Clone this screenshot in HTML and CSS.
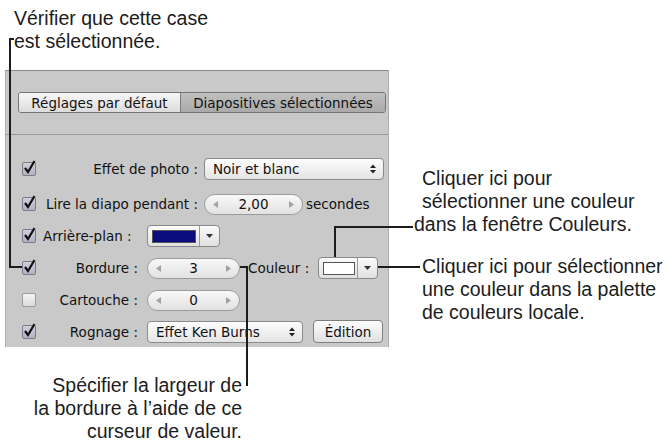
FILE: index.html
```html
<!DOCTYPE html>
<html lang="fr">
<head>
    <meta charset="UTF-8">
    <meta name="viewport" content="width=device-width, initial-scale=1.0">
    <title>Réglages du diaporama</title>
    <link rel="stylesheet" href="styles.css">
</head>
<body>
    <div class="page">
        <p class="note note-top">Vérifier que cette case<br>est sélectionnée.</p>

        <div class="panel">
            <div class="panel-head">
                <div class="segmented">
                    <span class="seg">Réglages par défaut</span>
                    <span class="seg active">Diapositives sélectionnées</span>
                </div>
            </div>

            <div class="panel-body">
                <div class="row first">
                    <span class="check"><svg width="15" height="16" viewBox="0 0 15 16"><path d="M3 9 L6 13 L12.5 2" fill="none" stroke="#111" stroke-width="2.2"/></svg></span>
                    <span class="label wide">Effet de photo :</span>
                    <div class="popup popup-photo">
                        <span>Noir et blanc</span>
                        <svg width="6" height="10" viewBox="0 0 6 10"><path d="M0 4 L3 0.5 L6 4 Z M0 6 L3 9.5 L6 6 Z" fill="#222"/></svg>
                    </div>
                </div>

                <div class="row">
                    <span class="check"><svg width="15" height="16" viewBox="0 0 15 16"><path d="M3 9 L6 13 L12.5 2" fill="none" stroke="#111" stroke-width="2.2"/></svg></span>
                    <span class="label wide">Lire la diapo pendant :</span>
                    <div class="stepper stepper-wide">
                        <svg width="5" height="7" viewBox="0 0 5 7"><path d="M5 0 L0 3.5 L5 7 Z" fill="#a3a3a3"/></svg>
                        <span>2,00</span>
                        <svg width="5" height="7" viewBox="0 0 5 7"><path d="M0 0 L5 3.5 L0 7 Z" fill="#a3a3a3"/></svg>
                    </div>
                    <span class="unit">secondes</span>
                </div>

                <div class="row">
                    <span class="check"><svg width="15" height="16" viewBox="0 0 15 16"><path d="M3 9 L6 13 L12.5 2" fill="none" stroke="#111" stroke-width="2.2"/></svg></span>
                    <span class="label narrow left">Arrière-plan :</span>
                    <div class="well well-bg">
                        <span class="swatch swatch-navy"></span>
                        <span class="well-menu"><svg width="7" height="4" viewBox="0 0 7 4"><path d="M0 0 H7 L3.5 4 Z" fill="#333"/></svg></span>
                    </div>
                </div>

                <div class="row">
                    <span class="check"><svg width="15" height="16" viewBox="0 0 15 16"><path d="M3 9 L6 13 L12.5 2" fill="none" stroke="#111" stroke-width="2.2"/></svg></span>
                    <span class="label narrow">Bordure :</span>
                    <div class="stepper stepper-small">
                        <svg width="5" height="7" viewBox="0 0 5 7"><path d="M5 0 L0 3.5 L5 7 Z" fill="#a3a3a3"/></svg>
                        <span>3</span>
                        <svg width="5" height="7" viewBox="0 0 5 7"><path d="M0 0 L5 3.5 L0 7 Z" fill="#a3a3a3"/></svg>
                    </div>
                    <span class="sub-label">Couleur :</span>
                    <div class="well well-border">
                        <span class="swatch swatch-white"></span>
                        <span class="well-menu"><svg width="7" height="4" viewBox="0 0 7 4"><path d="M0 0 H7 L3.5 4 Z" fill="#333"/></svg></span>
                    </div>
                </div>

                <div class="row">
                    <span class="check off"></span>
                    <span class="label narrow">Cartouche :</span>
                    <div class="stepper stepper-small">
                        <svg width="5" height="7" viewBox="0 0 5 7"><path d="M5 0 L0 3.5 L5 7 Z" fill="#a3a3a3"/></svg>
                        <span>0</span>
                        <svg width="5" height="7" viewBox="0 0 5 7"><path d="M0 0 L5 3.5 L0 7 Z" fill="#a3a3a3"/></svg>
                    </div>
                </div>

                <div class="row last">
                    <span class="check"><svg width="15" height="16" viewBox="0 0 15 16"><path d="M3 9 L6 13 L12.5 2" fill="none" stroke="#111" stroke-width="2.2"/></svg></span>
                    <span class="label narrow">Rognage :</span>
                    <div class="popup popup-crop">
                        <span>Effet Ken Burns</span>
                        <svg width="6" height="10" viewBox="0 0 6 10"><path d="M0 4 L3 0.5 L6 4 Z M0 6 L3 9.5 L6 6 Z" fill="#222"/></svg>
                    </div>
                    <button class="edit-btn">Édition</button>
                </div>
            </div>
        </div>

        <p class="note note-bottom">Spécifier la largeur de<br>la bordure à l’aide de ce<br>curseur de valeur.</p>

        <p class="note note-right note-well">Cliquer ici pour<br>sélectionner une couleur<br><span class="pull">dans la fenêtre Couleurs.</span></p>
        <p class="note note-right note-menu">Cliquer ici pour sélectionner<br>une couleur dans la palette<br>de couleurs locale.</p>

        <!-- leader lines -->
        <div class="lead lead-check-top"></div>
        <div class="lead lead-check-v"></div>
        <div class="lead lead-check-h"></div>
        <div class="lead lead-step-h"></div>
        <div class="lead lead-step-v"></div>
        <div class="lead lead-well-v"></div>
        <div class="lead lead-well-h"></div>
        <div class="lead lead-menu-h"></div>
    </div>
</body>
</html>
```

FILE: styles.css
```css
body {
    margin: 0;
    background-color: #ffffff;
    font-family: "Liberation Sans", Arial, sans-serif;
    color: #1c1c1c;
}

.page {
    position: relative;
    width: 667px;
    height: 446px;
    overflow: hidden;
}

.note {
    margin: 0;
    font-size: 19.5px;
    line-height: 23px;
}

.note-top {
    padding: 7px 0 0 14px;
}

.note-bottom {
    width: 242px;
    margin-top: 27px;
    text-align: right;
}

.note-right {
    position: absolute;
    left: 422px;
    white-space: nowrap;
}

.note-well {
    top: 167px;
}

.note-menu {
    top: 255px;
}

.pull {
    margin-left: -8px;
}

/* panel */

.panel {
    box-sizing: border-box;
    width: 384px;
    height: 277px;
    margin: 17px 0 0 5px;
    background-color: #c9c9c9;
    border-top: 1px solid #8a8a8a;
    border-left: 1px solid #adadad;
    border-right: 1px solid #adadad;
    font-family: "DejaVu Sans", Verdana, sans-serif;
    font-size: 13.5px;
    color: #111111;
}

.panel-head {
    height: 42px;
    padding: 21px 0 0 12px;
    border-bottom: 1px solid #9a9a9a;
}

.segmented {
    display: flex;
    box-sizing: border-box;
    width: 368px;
    height: 21px;
    border: 1px solid #737373;
    border-radius: 3px;
    overflow: hidden;
}

.seg {
    display: flex;
    align-items: center;
    justify-content: center;
    background: linear-gradient(#f7f7f7, #dcdcdc);
}

.seg:first-child {
    width: 161px;
    border-right: 1px solid #7c7c7c;
}

.seg.active {
    flex: 1;
    background: linear-gradient(#c0c0c0, #aaaaaa);
}

.panel-body {
    padding-top: 18px;
}

.row {
    display: flex;
    align-items: center;
    height: 32px;
    padding-left: 16px;
}

.row.first {
    margin-bottom: 3px;
}

.row.last {
    height: 31px;
}

.check {
    position: relative;
    flex: none;
    box-sizing: border-box;
    width: 14px;
    height: 14px;
    border: 1px solid #7b7b85;
    border-radius: 2px;
    background: linear-gradient(#cfd0da, #b2b3c2);
}

.check svg {
    position: absolute;
    left: -1px;
    top: -4px;
    overflow: visible;
}

.check.off {
    border-color: #9b9b9b;
    background: linear-gradient(#f4f4f4, #dadada);
}

.label {
    flex: none;
    white-space: nowrap;
}

.label.wide {
    width: 162px;
    margin-right: 6px;
    text-align: right;
}

.label.narrow {
    width: 102px;
    margin-right: 9px;
    text-align: right;
}

.label.left {
    box-sizing: border-box;
    padding-left: 7px;
    text-align: left;
}

.popup {
    display: flex;
    align-items: center;
    justify-content: space-between;
    box-sizing: border-box;
    height: 22px;
    padding: 0 7px 0 8px;
    border: 1px solid #8a8a8a;
    border-radius: 4px;
    background: linear-gradient(#fdfdfd, #e4e4e4);
}

.popup-photo {
    width: 180px;
}

.popup-crop {
    width: 156px;
}

.stepper {
    display: flex;
    align-items: center;
    justify-content: space-between;
    box-sizing: border-box;
    height: 21px;
    padding: 0 8px;
    border: 1px solid #9c9c9c;
    border-radius: 11px;
    background: linear-gradient(#f8f8f8, #e2e2e2);
}

.stepper-wide {
    width: 99px;
}

.stepper-small {
    width: 93px;
}

.unit {
    margin-left: 3px;
}

.sub-label {
    margin-left: 8px;
    white-space: nowrap;
}

.well {
    display: flex;
    align-items: center;
    box-sizing: border-box;
    height: 22px;
    border: 1px solid #8a8a8a;
    border-radius: 4px;
    background: linear-gradient(#fbfbfb, #e0e0e0);
}

.well-bg {
    width: 73px;
}

.well-border {
    width: 60px;
    margin-left: 9px;
}

.swatch {
    box-sizing: border-box;
    height: 13px;
    margin-left: 4px;
    border: 1px solid #555555;
}

.swatch-navy {
    width: 44px;
    background-color: #0c0c7e;
}

.swatch-white {
    width: 32px;
    background-color: #ffffff;
}

.well-menu {
    display: flex;
    align-items: center;
    justify-content: center;
    align-self: stretch;
    margin-left: auto;
    width: 19px;
    border-left: 1px solid #9a9a9a;
}

.edit-btn {
    box-sizing: border-box;
    width: 70px;
    height: 23px;
    margin-left: 10px;
    padding: 0;
    border: 1px solid #7e7e7e;
    border-radius: 4px;
    background: linear-gradient(#fdfdfd, #e0e0e0);
    font-family: inherit;
    font-size: 13.5px;
    color: #111111;
}

/* leader lines */

.lead {
    position: absolute;
    background-color: #1c1c1c;
}

.lead-check-top {
    left: 9px;
    top: 38px;
    width: 5px;
    height: 2px;
}

.lead-check-v {
    left: 9px;
    top: 38px;
    width: 2px;
    height: 230px;
}

.lead-check-h {
    left: 9px;
    top: 266px;
    width: 13px;
    height: 2px;
}

.lead-step-h {
    left: 240px;
    top: 266px;
    width: 8px;
    height: 2px;
}

.lead-step-v {
    left: 246px;
    top: 266px;
    width: 2px;
    height: 120px;
}

.lead-well-v {
    left: 334px;
    top: 226px;
    width: 2px;
    height: 31px;
}

.lead-well-h {
    left: 334px;
    top: 226px;
    width: 79px;
    height: 2px;
}

.lead-menu-h {
    left: 378px;
    top: 266px;
    width: 42px;
    height: 2px;
}
```
